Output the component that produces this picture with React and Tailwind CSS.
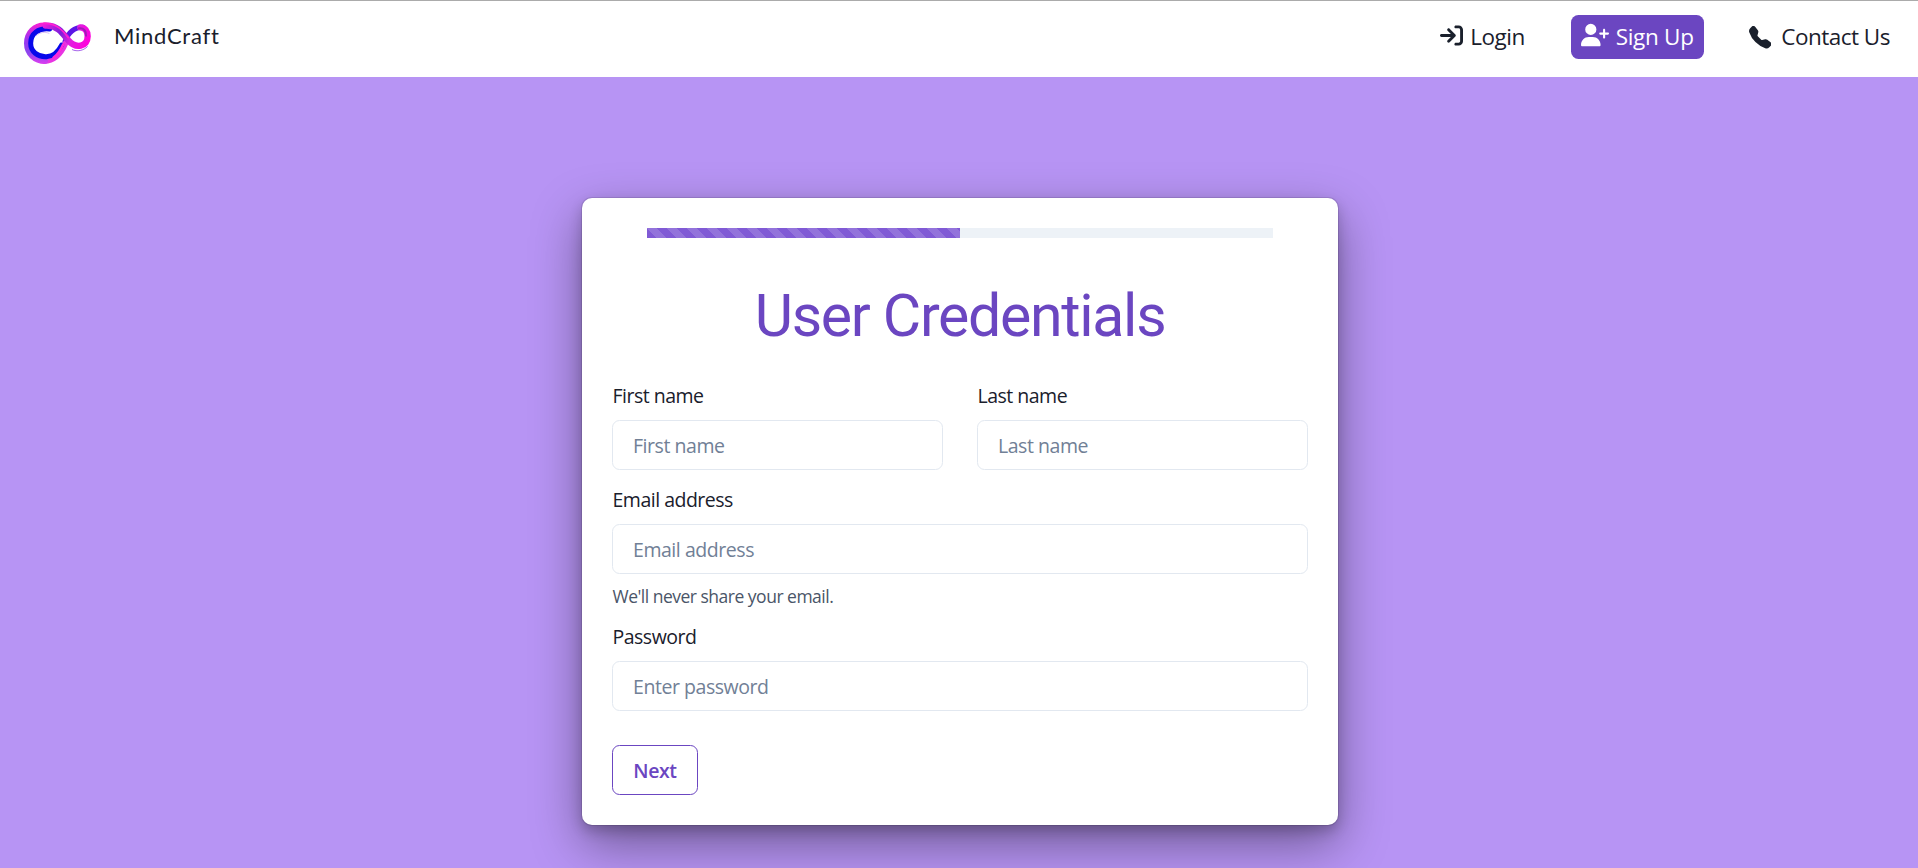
import { FaArrowRightToBracket, FaUserPlus } from "react-icons/fa6";
import { BsFillTelephoneFill } from "react-icons/bs";

function Logo() {
  return (
    <svg className="h-11 w-[69px]" viewBox="24 26 207 132" fill="none" strokeLinecap="round">
      <defs>
        <linearGradient id="ring" x1="90" y1="30" x2="80" y2="156" gradientUnits="userSpaceOnUse">
          <stop offset="0" stopColor="#ff1fd2" />
          <stop offset="0.45" stopColor="#9a35f0" />
          <stop offset="0.75" stopColor="#8c46ee" />
          <stop offset="1" stopColor="#e03cf0" />
        </linearGradient>
        <linearGradient id="band" x1="85" y1="35" x2="215" y2="100" gradientUnits="userSpaceOnUse">
          <stop offset="0" stopColor="#f01edc" />
          <stop offset="0.4" stopColor="#7a1edc" />
          <stop offset="0.65" stopColor="#e01ee0" />
          <stop offset="1" stopColor="#ff00dc" />
        </linearGradient>
      </defs>
      <path d="M150 88C160 60 178 45 204 45" stroke="#5a16e6" strokeWidth="15" />
      <path d="M88 146C122 146 140 120 152 92" stroke="#e834e2" strokeWidth="17" />
      <path d="M92 40C58 38 36 62 36 93C36 124 60 146 90 146" stroke="url(#ring)" strokeWidth="18" />
      <path d="M104 50C70 46 47 64 47 93C47 118 68 134 94 133C116 132 130 118 140 98" stroke="#0808ea" strokeWidth="15" />
      <path d="M116 136C130 126 138 112 145 96" stroke="#ff2ad8" strokeWidth="8" />
      <path d="M92 40C128 38 144 64 160 84C182 110 218 104 218 72C218 56 210 46 196 45" stroke="url(#band)" strokeWidth="19" />
      <path d="M86 33C126 32 144 56 160 76" stroke="#ff1fd2" strokeWidth="5" />
      <path d="M192 48C206 46 214 56 213 70" stroke="#a01bb8" strokeWidth="6" />
      <path d="M64 70C74 60 90 57 102 63" stroke="#c9a0f0" strokeWidth="2" />
      <path d="M172 112C186 119 206 115 217 103" stroke="#7a18e0" strokeWidth="2" />
    </svg>
  );
}

function Field({ label, type = "text", placeholder }) {
  return (
    <label className="block">
      <span className="block pt-px pb-[9px] pl-[0.5px] text-[19.5px] leading-[30px] tracking-[-0.5px] text-[#1a202c]">{label}</span>
      <input
        type={type}
        placeholder={placeholder}
        className="block h-[50px] w-full rounded-[7.5px] border border-[#e2e8f0] bg-white px-5 pt-px text-[19.5px] tracking-[-0.45px] text-[#1a202c] outline-none placeholder:text-[#718096]"
      />
    </label>
  );
}

export default function App() {
  return (
    <div className="flex h-[868px] flex-col overflow-hidden bg-[#b794f4] font-['Open_Sans','Noto_Sans',sans-serif] text-[#1a202c]">
      <header className="flex h-[77px] shrink-0 items-start justify-between border-t border-[#ababab] bg-white pr-7 pl-[23px]">
        <div className="flex items-start">
          <div className="pt-5">
            <Logo />
          </div>
          <span className="ml-[22px] pt-5 font-['Lato',sans-serif] text-[22px] leading-[30px] tracking-[0.75px]">MindCraft</span>
        </div>
        <nav className="flex pt-3.5 text-[22.5px] leading-[44px] tracking-[-0.5px]">
          <a className="flex">
            <FaArrowRightToBracket className="mt-[9px] mr-[7px] size-[23px]" />
            Login
          </a>
          <a className="ml-[46px] flex h-[44px] w-[133px] rounded-[7.5px] bg-[#6b46c1] pl-2.5 tracking-[-0.3px] text-white">
            <FaUserPlus className="mt-[6px] mr-[7px] size-7 shrink-0" />
            Sign Up
          </a>
          <a className="ml-[45px] flex">
            <BsFillTelephoneFill className="mt-[11px] mr-[10px] size-[22.5px]" />
            Contact Us
          </a>
        </nav>
      </header>
      <main className="flex justify-center pt-[121px] pl-[2px]">
        <div className="h-[627px] w-[756px] rounded-[10px] bg-white px-[30px] pt-[30px] shadow-[0_0_0_1px_rgba(0,0,0,0.1),0_6px_12.5px_rgba(0,0,0,0.2),0_19px_50px_rgba(0,0,0,0.4)]">
          <div className="mx-[35px] h-2.5 bg-[#edf2f7]">
            <div className="h-full w-1/2 bg-[#805ad5] bg-[linear-gradient(45deg,rgba(255,255,255,0.15)_25%,transparent_25%,transparent_50%,rgba(255,255,255,0.15)_50%,rgba(255,255,255,0.15)_75%,transparent_75%,transparent)] bg-[length:20px_20px]" />
          </div>
          <h1 className="mt-[41px] text-center font-['Roboto',sans-serif] text-[59px] leading-[74px] tracking-[-1.3px] text-[#6b46c1]">
            User Credentials
          </h1>
          <form className="mt-[27px]">
            <div className="grid grid-cols-2 gap-[34px]">
              <Field label="First name" placeholder="First name" />
              <Field label="Last name" placeholder="Last name" />
            </div>
            <div className="mt-3.5">
              <Field label="Email address" type="email" placeholder="Email address" />
            </div>
            <p className="mt-[9px] mb-3 pl-[0.5px] text-[17.5px] leading-[26px] tracking-[-0.5px] text-[#4a5568]">We'll never share your email.</p>
            <Field label="Password" type="password" placeholder="Enter password" />
            <button type="button" className="mt-[34px] h-[50px] w-[86px] rounded-[7.5px] border border-[#6b46c1] pt-0.5 text-[19.5px] font-semibold tracking-[-0.4px] text-[#6b46c1]">
              Next
            </button>
          </form>
        </div>
      </main>
    </div>
  );
}
